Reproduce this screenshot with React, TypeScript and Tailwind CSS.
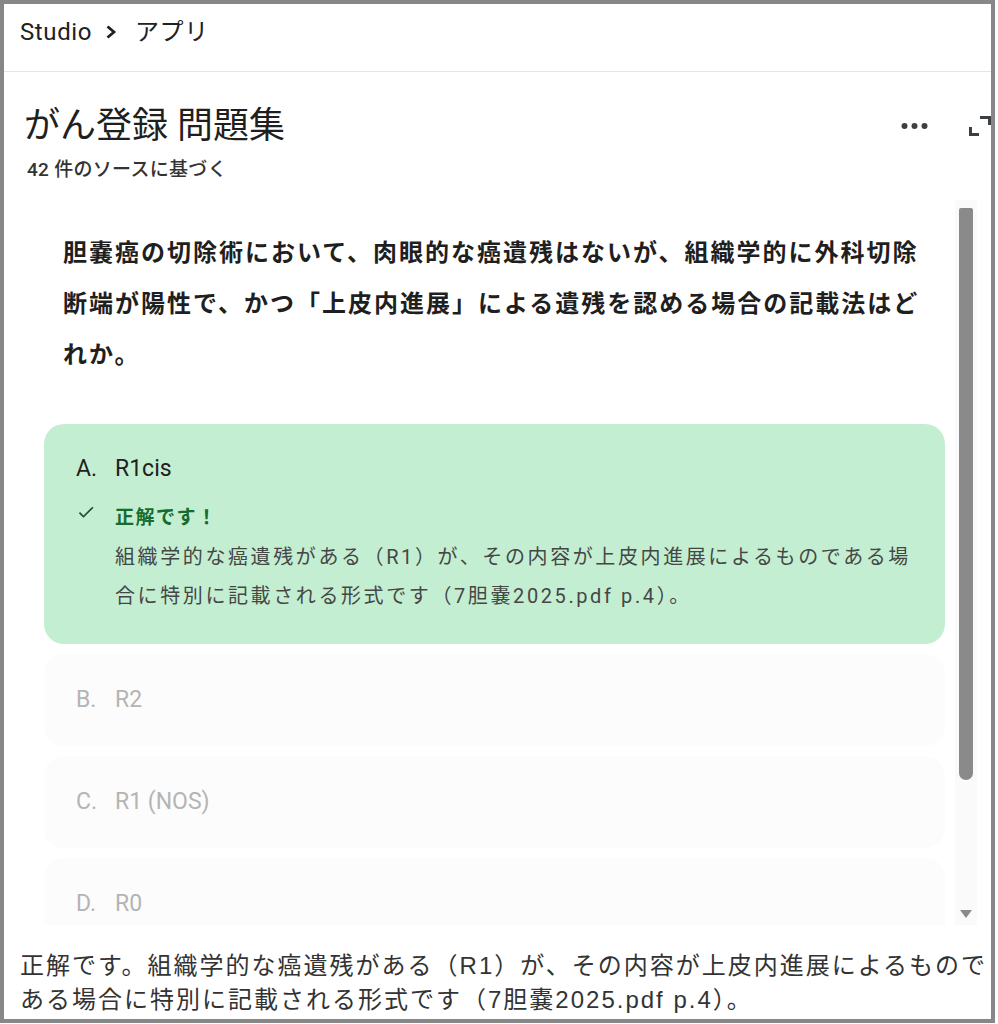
import React from 'react';

const SANS = "font-['Roboto','Noto_Sans_CJK_JP',sans-serif]";

const options = [
  { key: 'B', label: 'R2' },
  { key: 'C', label: 'R1 (NOS)' },
  { key: 'D', label: 'R0' },
];

const ChevronIcon: React.FC = () => (
  <svg width="12" height="14" viewBox="0 0 12 14" className="text-[#202124]">
    <polyline points="2.5,1.5 9,7 2.5,12.5" fill="none" stroke="currentColor" strokeWidth="2.8" />
  </svg>
);

const DotsIcon: React.FC = () => (
  <svg width="27" height="8" viewBox="0 0 27 8" className="text-[#3c4043]">
    <circle cx="3.5" cy="4" r="3" fill="currentColor" />
    <circle cx="13.5" cy="4" r="3" fill="currentColor" />
    <circle cx="23.5" cy="4" r="3" fill="currentColor" />
  </svg>
);

const ExpandIcon: React.FC = () => (
  <svg width="24" height="22" viewBox="0 0 24 22" className="text-[#3c4043]">
    <path d="M12 2.5 H21.5 V10" fill="none" stroke="currentColor" strokeWidth="3" />
    <path d="M2.5 12 V19.5 H11" fill="none" stroke="currentColor" strokeWidth="3" />
  </svg>
);

const CheckIcon: React.FC = () => (
  <svg width="20" height="20" viewBox="0 0 24 24" className="text-[#1f4d30]">
    <path d="M9 16.17L4.83 12l-1.42 1.41L9 19 21 7l-1.41-1.41z" fill="currentColor" />
  </svg>
);

const App: React.FC = () => {
  return (
    <div className={`w-[998px] h-[1024px] bg-white ${SANS}`}>
      <div className="w-[995px] h-[1023px] border-4 border-[#878787] flex flex-col overflow-hidden bg-white">
        {/* Breadcrumb */}
        <div className="h-[68px] shrink-0 border-b border-[#e2e4f0] pt-[13px] pl-[16px]">
          <div className="flex items-center h-[30px] text-[24px] tracking-[0.6px] text-[#202124]">
            <span>Studio</span>
            <span className="ml-[13px] mr-[18px] flex items-center">
              <ChevronIcon />
            </span>
            <span>アプリ</span>
          </div>
        </div>

        {/* Title */}
        <div className="h-[128px] shrink-0 pt-[32px] pl-[20px]">
          <div className="flex items-center h-[44px]">
            <h1 className="flex-1 text-[36px] leading-[44px] text-[#1f1f1f]">がん登録 問題集</h1>
            <div className="flex items-center">
              <DotsIcon />
              <div className="ml-[40px] -mr-[1px]">
                <ExpandIcon />
              </div>
            </div>
          </div>
          <div className="mt-[10px] ml-[3px] text-[19px] leading-[24px] font-medium tracking-[0.3px] text-[#333]">
            42 件のソースに基づく
          </div>
        </div>

        {/* Scroll area */}
        <div className="flex-1 min-h-0 flex">
          <div className="flex-1 min-w-0 overflow-hidden pl-[40px] pr-[10px]">
            <p className="ml-[19px] w-[870px] pt-[28px] text-[24px] leading-[51px] tracking-[2px] font-bold text-[#1f1f1f]">
              胆嚢癌の切除術において、肉眼的な癌遺残はないが、組織学的に外科切除断端が陽性で、かつ「上皮内進展」による遺残を認める場合の記載法はどれか。
            </p>

            <div className="mt-[43px] flex flex-col gap-[10px]">
              {/* Correct answer */}
              <div className="rounded-[20px] bg-[#c4eed2] pl-[32px] pr-[22px] pt-[30px] pb-[28px]">
                <div className="flex h-[30px] items-center text-[23px] text-[#1f1f1f]">
                  <span className="w-[39px]">A.</span>
                  <span>R1cis</span>
                </div>
                <div className="mt-[20px] flex">
                  <div className="w-[39px] shrink-0">
                    <div className="mt-[-2px]">
                      <CheckIcon />
                    </div>
                  </div>
                  <div className="flex-1 min-w-0">
                    <div className="h-[28px] leading-[28px] text-[19px] font-bold tracking-[1.5px] text-[#146c2e]">
                      正解です！
                    </div>
                    <p className="mt-[6px] text-[20px] leading-[39px] tracking-[2.6px] text-[#444746]">
                      組織学的な癌遺残がある（R1）が、その内容が上皮内進展によるものである場合に特別に記載される形式です（7胆嚢2025.pdf p.4）。
                    </p>
                  </div>
                </div>
              </div>

              {options.map((opt) => (
                <div
                  key={opt.key}
                  className="h-[92px] shrink-0 rounded-[20px] bg-[#fcfcfc] pl-[32px] flex items-center text-[23px] text-[#b4b4b4]"
                >
                  <span className="w-[39px]">{opt.key}.</span>
                  <span>{opt.label}</span>
                </div>
              ))}
            </div>
          </div>

          {/* Scrollbar */}
          <div className="w-[22px] shrink-0 bg-[#fafafa] flex flex-col items-center justify-between">
            <div className="mt-[8px] w-[14px] h-[572px] bg-[#8a8a8a] rounded-t-[2px] rounded-b-[7px]" />
            <svg width="12" height="8" viewBox="0 0 12 8" className="mb-[7px] text-[#8a8a8a]">
              <polygon points="0,0 12,0 6,8" fill="currentColor" />
            </svg>
          </div>
          <div className="w-[14px] shrink-0" />
        </div>

        {/* Bottom summary */}
        <div className="h-[94px] shrink-0 pt-[24px] pl-[16px] text-[24px] leading-[34px] tracking-[2px] text-[#333] font-['Liberation_Sans','Noto_Sans_CJK_JP',sans-serif]">
          正解です。組織学的な癌遺残がある（R1）が、その内容が上皮内進展によるものである場合に特別に記載される形式です（7胆嚢2025.pdf p.4）。
        </div>
      </div>
    </div>
  );
};

export default App;
